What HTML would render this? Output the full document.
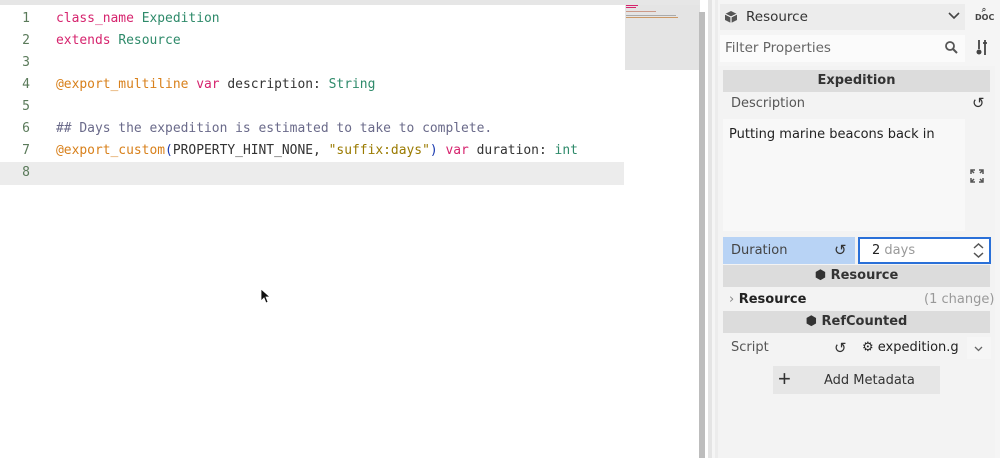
<!DOCTYPE html>
<html><head><style>
*{margin:0;padding:0;box-sizing:border-box}
body{width:1000px;height:458px;overflow:hidden;background:#fff;font-family:"Liberation Sans",sans-serif;position:relative}
.a{position:absolute}
.code{font-family:"DejaVu Sans Mono","Liberation Mono",monospace;font-size:12.95px;color:#333}
.ln{position:absolute;left:0;width:30px;text-align:right;color:#5a7a5a;font-family:"DejaVu Sans Mono",monospace;font-size:13px}
.cl{position:absolute;left:56px;white-space:pre}
.k{color:#d6246e}.t{color:#2e8a6a}.an{color:#d8801b}.c{color:#6a6a8a}.s{color:#9a7a00}.p{color:#1a3ab0}
.ui{font-family:"DejaVu Sans",sans-serif;font-size:13px;color:#333}
.hdr{position:absolute;left:723px;width:267px;height:22px;background:#dcdcdc;text-align:center;font-weight:bold;font-size:13px;line-height:22px;color:#333;font-family:"DejaVu Sans",sans-serif}
</style></head><body>
<div class="a" style="left:0;top:0;width:700px;height:5px;background:#e6e6e6"></div>
<div class="a" style="left:0;top:162px;width:624px;height:23px;background:#ececec"></div>
<div class="code">
<div class="ln" style="top:11px">1</div><div class="cl" style="top:11px"><span class="k">class_name</span> <span class="t">Expedition</span></div>
<div class="ln" style="top:33px">2</div><div class="cl" style="top:33px"><span class="k">extends</span> <span class="t">Resource</span></div>
<div class="ln" style="top:55px">3</div>
<div class="ln" style="top:77px">4</div><div class="cl" style="top:77px"><span class="an">@export_multiline</span> <span class="k">var</span> description: <span class="t">String</span></div>
<div class="ln" style="top:99px">5</div>
<div class="ln" style="top:121px">6</div><div class="cl" style="top:121px"><span class="c">## Days the expedition is estimated to take to complete.</span></div>
<div class="ln" style="top:143px">7</div><div class="cl" style="top:143px"><span class="an">@export_custom</span><span class="p">(</span>PROPERTY_HINT_NONE, <span class="s">"suffix:days"</span><span class="p">)</span> <span class="k">var</span> duration: <span class="t">int</span></div>
<div class="ln" style="top:165px">8</div>
</div>
<div class="a" style="left:625px;top:5px;width:75px;height:65px;background:#e4e4e4"></div>
<div class="a" style="left:626px;top:5px;width:12px;height:1px;background:#d6246e"></div>
<div class="a" style="left:626px;top:7px;width:10px;height:1px;background:#d6246e"></div>
<div class="a" style="left:626px;top:11px;width:30px;height:1px;background:#c98"></div>
<div class="a" style="left:626px;top:15px;width:50px;height:1px;background:#aaa"></div>
<div class="a" style="left:626px;top:17px;width:52px;height:1px;background:#c96"></div>
<div class="a" style="left:699px;top:12px;width:6px;height:446px;background:#bdbdbd"></div>
<div class="a" style="left:708px;top:0;width:4px;height:458px;background:#e4e4e4"></div>
<div class="a" style="left:712px;top:0;width:288px;height:458px;background:#f5f5f5"></div>
<div class="a" style="left:715px;top:0;width:3px;height:458px;background:#ececec"></div>
<div class="a ui" style="left:720px;top:4px;width:245px;height:26px;background:#ececec;line-height:26px;padding-left:26px;font-size:13.5px">Resource</div>
<svg class="a" style="left:724px;top:10px" width="14" height="14" viewBox="0 0 14 14"><path d="M7 1L13 4V10L7 13L1 10V4Z" fill="#555"/><path d="M1 4L7 7L13 4M7 7V13" stroke="#f5f5f5" stroke-width="1.2" fill="none"/></svg>
<svg class="a" style="left:948px;top:12px" width="12" height="8"><path d="M1 1L6 6L11 1" stroke="#444" stroke-width="1.6" fill="none"/></svg>
<div class="a" style="left:975px;top:6px;font-size:8px;font-weight:bold;color:#444;font-family:'DejaVu Sans',sans-serif;line-height:8px;text-align:center;width:18px">⌕<br>DOC</div>
<div class="a ui" style="left:720px;top:35px;width:245px;height:27px;background:#fbfbfb;line-height:27px;padding-left:5px;color:#666;font-size:13.5px">Filter Properties</div>
<svg class="a" style="left:944px;top:40px" width="14" height="14"><circle cx="6" cy="6" r="4" stroke="#555" stroke-width="1.8" fill="none"/><path d="M9 9L13 13" stroke="#555" stroke-width="2"/></svg>
<svg class="a" style="left:976px;top:40px" width="12" height="16"><path d="M3 0V9M9 0V3M7 3H11M9 3V15" stroke="#444" stroke-width="1.8" fill="none"/><circle cx="3" cy="12" r="2.5" fill="#444"/></svg>
<div class="a" style="left:718px;top:66px;width:277px;height:392px;background:#f3f3f3"></div>
<div class="hdr" style="top:70px">Expedition</div>
<div class="a ui" style="left:731px;top:96px;color:#555">Description</div>
<div class="a" style="left:972px;top:94px;font-size:15px;color:#333">↺</div>
<div class="a" style="left:723px;top:119px;width:242px;height:112px;background:#f8f8f8"></div>
<div class="a ui" style="left:729px;top:127px;color:#222">Putting marine beacons back in</div>
<svg class="a" style="left:970px;top:169px" width="14" height="14" viewBox="0 0 14 14" stroke="#555" stroke-width="1.5" fill="none"><path d="M1 5V1H5M1 1L4 4M9 1H13V5M13 1L10 4M1 9V13H5M1 13L4 10M13 9V13H9M13 13L10 10"/></svg>
<div class="a" style="left:723px;top:237px;width:132px;height:27px;background:#b8d3f5"></div>
<div class="a ui" style="left:731px;top:243px;color:#444">Duration</div>
<div class="a" style="left:834px;top:241px;font-size:15px;color:#333">↺</div>
<div class="a" style="left:858px;top:237px;width:133px;height:27px;background:#fff;border:2px solid #2a70d8"></div>
<div class="a ui" style="left:872px;top:243px;color:#222">2 <span style="color:#999">days</span></div>
<svg class="a" style="left:973px;top:243px" width="11" height="15"><path d="M1 5L5.5 1L10 5M1 10L5.5 14L10 10" stroke="#555" stroke-width="1.5" fill="none"/></svg>
<div class="hdr" style="top:265px">⬢ Resource</div>
<div class="a ui" style="left:729px;top:292px;font-weight:bold;color:#222"><span style="color:#888;font-weight:normal">›</span> Resource</div>
<div class="a ui" style="left:924px;top:292px;color:#999">(1 change)</div>
<div class="hdr" style="top:311px">⬢ RefCounted</div>
<div class="a ui" style="left:731px;top:340px;color:#555">Script</div>
<div class="a" style="left:834px;top:339px;font-size:15px;color:#333">↺</div>
<div class="a ui" style="left:862px;top:340px;color:#222">⚙ expedition.g</div>
<div class="a" style="left:967px;top:337px;width:24px;height:22px;background:#f6f6f6"></div>
<svg class="a" style="left:974px;top:346px" width="9" height="6"><path d="M1 1L4.5 4.5L8 1" stroke="#666" stroke-width="1.3" fill="none"/></svg>
<div class="a" style="left:773px;top:366px;width:167px;height:28px;background:#e6e6e6"></div>
<div class="a" style="left:778px;top:366px;font-size:22px;color:#333;line-height:26px">+</div>
<div class="a ui" style="left:824px;top:373px;color:#333">Add Metadata</div>
<svg class="a" style="left:260px;top:288px" width="10" height="16"><path d="M1 1V13L4 10L6 15L8 14L6 9H10Z" fill="#111" stroke="#fff" stroke-width=".8"/></svg>
</body></html>
